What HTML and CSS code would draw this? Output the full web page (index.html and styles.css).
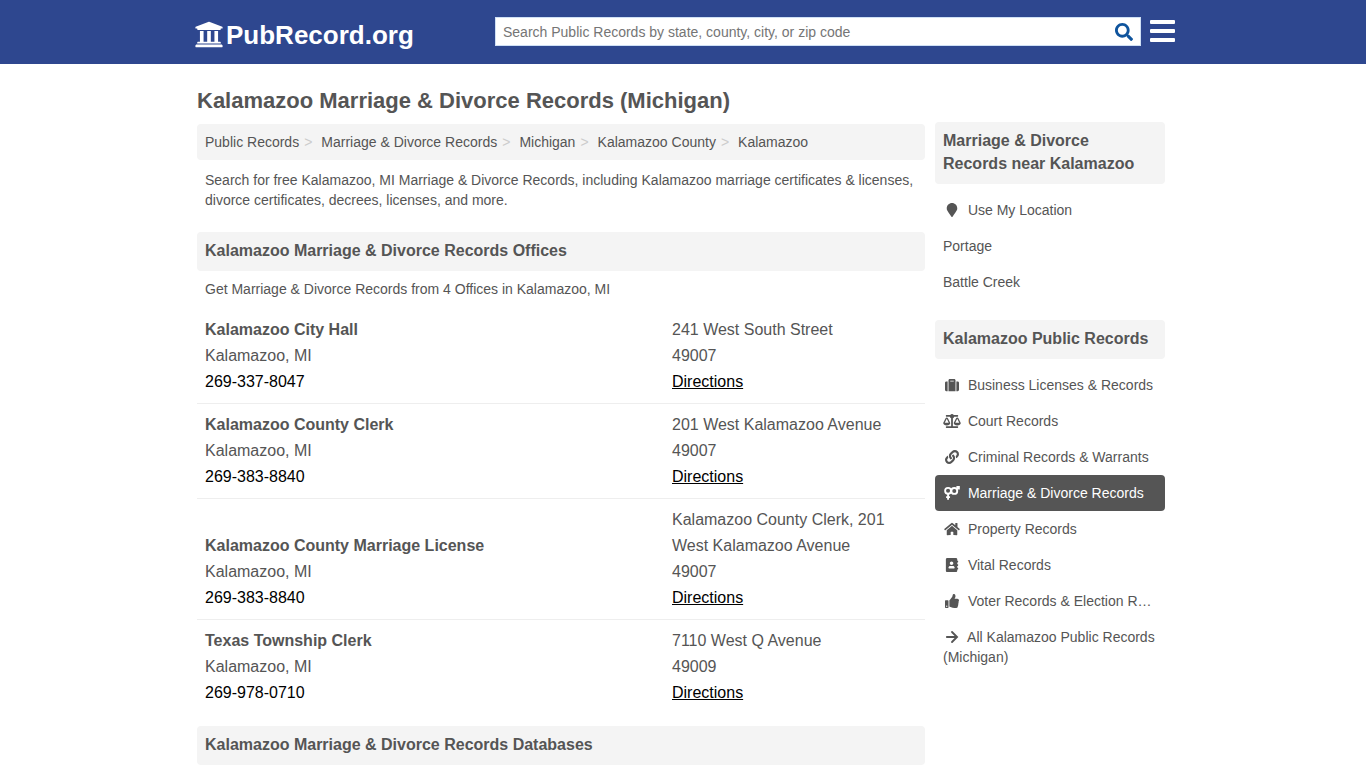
FILE: index.html
```html
<!DOCTYPE html>
<html lang="en">
<head>
  <meta charset="UTF-8" />
  <meta name="viewport" content="width=device-width, initial-scale=1.0" />
  <title>Kalamazoo Marriage &amp; Divorce Records (Michigan)</title>
  <link rel="stylesheet" href="styles.css">
</head>
<body>
  <header class="header">
    <div class="header-inner">
      <a class="logo" href="#">
        <svg viewBox="16 0 480 512" aria-hidden="true"><path d="M496 128v16a8 8 0 0 1-8 8h-24v12c0 6.627-5.373 12-12 12H60c-6.627 0-12-5.373-12-12v-12H24a8 8 0 0 1-8-8v-16a8 8 0 0 1 4.941-7.392l232-88a7.996 7.996 0 0 1 6.118 0l232 88A8 8 0 0 1 496 128zm-24 304H40c-13.255 0-24 10.745-24 24v16a8 8 0 0 0 8 8h464a8 8 0 0 0 8-8v-16c0-13.255-10.745-24-24-24zM96 192v192H60c-6.627 0-12 5.373-12 12v20h416v-20c0-6.627-5.373-12-12-12h-36V192h-64v192h-64V192h-64v192h-64V192H96z"/></svg>
        <span>PubRecord.org</span>
      </a>
      <form class="search" role="search">
        <input type="text" placeholder="Search Public Records by state, county, city, or zip code" aria-label="Search Public Records" />
        <button type="submit" aria-label="Search">
          <svg viewBox="0 0 512 512" aria-hidden="true"><path d="M505 442.7L405.3 343c-4.5-4.5-10.6-7-17-7H372c27.6-35.3 44-79.7 44-128C416 93.1 322.9 0 208 0S0 93.1 0 208s93.1 208 208 208c48.3 0 92.7-16.4 128-44v16.3c0 6.4 2.5 12.5 7 17l99.7 99.7c9.4 9.4 24.6 9.4 33.9 0l28.3-28.3c9.4-9.4 9.4-24.6.1-34zM208 336c-70.7 0-128-57.2-128-128 0-70.7 57.2-128 128-128 70.7 0 128 57.2 128 128 0 70.7-57.2 128-128 128z"/></svg>
        </button>
      </form>
      <button class="menu" type="button" aria-label="Menu">
        <span></span><span></span><span></span>
      </button>
    </div>
  </header>

  <div class="page">
    <main class="main">
      <h1>Kalamazoo Marriage &amp; Divorce Records (Michigan)</h1>
      <nav aria-label="Breadcrumb">
        <ol class="breadcrumb">
          <li><a href="#">Public Records</a></li>
          <li><a href="#">Marriage &amp; Divorce Records</a></li>
          <li><a href="#">Michigan</a></li>
          <li><a href="#">Kalamazoo County</a></li>
          <li><a href="#">Kalamazoo</a></li>
        </ol>
      </nav>
      <p class="intro">Search for free Kalamazoo, MI Marriage &amp; Divorce Records, including Kalamazoo marriage certificates &amp; licenses, divorce certificates, decrees, licenses, and more.</p>

      <h2>Kalamazoo Marriage &amp; Divorce Records Offices</h2>
      <p class="note">Get Marriage &amp; Divorce Records from 4 Offices in Kalamazoo, MI</p>
      <table class="offices">
        <tr>
          <td><b>Kalamazoo City Hall</b><br>Kalamazoo, MI<br><a class="phone" href="tel:269-337-8047">269-337-8047</a></td>
          <td>241 West South Street<br>49007<br><a href="#">Directions</a></td>
        </tr>
        <tr>
          <td><b>Kalamazoo County Clerk</b><br>Kalamazoo, MI<br><a class="phone" href="tel:269-383-8840">269-383-8840</a></td>
          <td>201 West Kalamazoo Avenue<br>49007<br><a href="#">Directions</a></td>
        </tr>
        <tr>
          <td><b>Kalamazoo County Marriage License</b><br>Kalamazoo, MI<br><a class="phone" href="tel:269-383-8840">269-383-8840</a></td>
          <td>Kalamazoo County Clerk, 201 West Kalamazoo Avenue<br>49007<br><a href="#">Directions</a></td>
        </tr>
        <tr>
          <td><b>Texas Township Clerk</b><br>Kalamazoo, MI<br><a class="phone" href="tel:269-978-0710">269-978-0710</a></td>
          <td>7110 West Q Avenue<br>49009<br><a href="#">Directions</a></td>
        </tr>
      </table>

      <h2>Kalamazoo Marriage &amp; Divorce Records Databases</h2>
    </main>

    <aside class="side">
      <h2>Marriage &amp; Divorce Records near Kalamazoo</h2>
      <ul>
        <li><a href="#"><svg viewBox="0 0 384 512" aria-hidden="true"><path d="M172.268 501.67C26.97 291.031 0 269.413 0 192 0 85.961 85.961 0 192 0s192 85.961 192 192c0 77.413-26.97 99.031-172.268 309.67-9.535 13.774-29.93 13.773-39.464 0z"/></svg> Use My Location</a></li>
        <li><a href="#">Portage</a></li>
        <li><a href="#">Battle Creek</a></li>
      </ul>

      <h2>Kalamazoo Public Records</h2>
      <ul>
        <li><a href="#"><svg viewBox="0 0 512 512" aria-hidden="true"><path d="M128 480h256V80c0-26.500-21.500-48-48-48H176c-26.500 0-48 21.500-48 48v400zm64-384h128v32H192V96zm320 80v256c0 26.500-21.500 48-48 48h-48V128h48c26.500 0 48 21.500 48 48zM96 480H48c-26.500 0-48-21.500-48-48V176c0-26.500 21.500-48 48-48h48v352z"/></svg> Business Licenses &amp; Records</a></li>
        <li><a href="#"><svg viewBox="0 0 640 512" aria-hidden="true"><path d="M256 336h-.02c0-16.18 1.34-8.73-85.05-181.51-17.65-35.29-68.19-35.36-85.87 0C-2.06 328.75.02 320.33.02 336H0c0 44.18 57.31 80 128 80s128-35.82 128-80zM128 176l72 144H56l72-144zm511.98 160c0-16.18 1.34-8.73-85.05-181.51-17.65-35.29-68.19-35.36-85.87 0-87.12 174.26-85.04 165.84-85.04 181.51H384c0 44.18 57.31 80 128 80s128-35.82 128-80h-.02zM440 320l72-144 72 144H440zm88 128H352V153.25c23.51-10.29 41.16-31.48 46.39-57.25H528c8.84 0 16-7.16 16-16V48c0-8.84-7.16-16-16-16H383.64C369.04 12.68 346.09 0 320 0s-49.04 12.68-63.64 32H112c-8.84 0-16 7.16-16 16v32c0 8.84 7.16 16 16 16h129.61c5.23 25.76 22.87 46.96 46.39 57.25V448H112c-8.84 0-16 7.16-16 16v32c0 8.84 7.16 16 16 16h416c8.84 0 16-7.16 16-16v-32c0-8.84-7.16-16-16-16z"/></svg> Court Records</a></li>
        <li><a href="#"><svg viewBox="0 0 512 512" aria-hidden="true"><path d="M326.612 185.391c59.747 59.809 58.927 155.698.36 214.59-.11.12-.24.25-.36.37l-67.2 67.2c-59.27 59.27-155.699 59.262-214.96 0-59.27-59.26-59.27-155.7 0-214.96l37.106-37.106c9.84-9.84 26.786-3.3 27.294 10.606.648 17.722 3.826 35.527 9.69 52.721 1.986 5.822.567 12.262-3.783 16.612l-13.087 13.087c-28.026 28.026-28.905 73.66-1.155 101.96 28.024 28.579 74.086 28.749 102.325.51l67.2-67.19c28.191-28.191 28.073-73.757 0-101.83-3.701-3.694-7.429-6.564-10.341-8.569a16.037 16.037 0 0 1-6.947-12.606c-.396-10.567 3.348-21.456 11.698-29.806l21.054-21.055c5.521-5.521 14.182-6.199 20.584-1.731a152.482 152.482 0 0 1 20.522 17.197zM467.547 44.449c-59.261-59.262-155.69-59.27-214.96 0l-67.2 67.2c-.12.12-.25.25-.36.37-58.566 58.892-59.387 154.781.36 214.59a152.454 152.454 0 0 0 20.521 17.196c6.402 4.468 15.064 3.789 20.584-1.731l21.054-21.055c8.35-8.35 12.094-19.239 11.698-29.806a16.037 16.037 0 0 0-6.947-12.606c-2.912-2.005-6.64-4.875-10.341-8.569-28.073-28.073-28.191-73.639 0-101.83l67.2-67.19c28.239-28.239 74.3-28.069 102.325.51 27.75 28.3 26.872 73.934-1.155 101.96l-13.087 13.087c-4.35 4.35-5.769 10.79-3.783 16.612 5.864 17.194 9.042 34.999 9.69 52.721.509 13.906 17.454 20.446 27.294 10.606l37.106-37.106c59.271-59.259 59.271-155.699.001-214.959z"/></svg> Criminal Records &amp; Warrants</a></li>
        <li><a class="active" href="#"><svg class="outline" viewBox="0 0 576 512" aria-hidden="true"><circle cx="144" cy="176" r="108"/><path d="M144 288v216M72 408h144M455 100l80-72M450 34h90v90"/><circle cx="372" cy="180" r="108"/></svg> Marriage &amp; Divorce Records</a></li>
        <li><a href="#"><svg viewBox="0 0 576 512" aria-hidden="true"><path d="M280.37 148.26L96 300.11V464a16 16 0 0 0 16 16l112.06-.29a16 16 0 0 0 15.92-16V368a16 16 0 0 1 16-16h64a16 16 0 0 1 16 16v95.64a16 16 0 0 0 16 16.05L464 480a16 16 0 0 0 16-16V300L295.67 148.26a12.19 12.19 0 0 0-15.3 0zM571.6 251.47L488 182.56V44.05a12 12 0 0 0-12-12h-56a12 12 0 0 0-12 12v72.61L318.47 43a48 48 0 0 0-61 0L4.34 251.47a12 12 0 0 0-1.6 16.9l25.5 31A12 12 0 0 0 45.15 301l235.22-193.74a12.19 12.19 0 0 1 15.3 0L530.9 301a12 12 0 0 0 16.9-1.6l25.5-31a12 12 0 0 0-1.7-16.93z"/></svg> Property Records</a></li>
        <li><a href="#"><svg viewBox="0 0 448 512" aria-hidden="true"><path d="M436 160c6.6 0 12-5.4 12-12v-40c0-6.6-5.4-12-12-12h-20V48c0-26.5-21.5-48-48-48H48C21.5 0 0 21.5 0 48v416c0 26.5 21.5 48 48 48h320c26.5 0 48-21.5 48-48v-48h20c6.6 0 12-5.4 12-12v-40c0-6.6-5.4-12-12-12h-20v-64h20c6.6 0 12-5.4 12-12v-40c0-6.6-5.4-12-12-12h-20v-64h20zm-228-32c35.3 0 64 28.7 64 64s-28.7 64-64 64-64-28.7-64-64 28.7-64 64-64zm112 236.8c0 10.6-10 19.2-22.4 19.2H118.4C106 384 96 375.4 96 364.8v-19.2c0-31.8 30.1-57.6 67.2-57.6h5c12.3 5.1 25.7 8 39.8 8s27.6-2.9 39.8-8h5c37.1 0 67.2 25.8 67.2 57.6v19.2z"/></svg> Vital Records</a></li>
        <li><a href="#"><svg viewBox="0 0 512 512" aria-hidden="true"><path d="M104 224H24c-13.255 0-24 10.745-24 24v240c0 13.255 10.745 24 24 24h80c13.255 0 24-10.745 24-24V248c0-13.255-10.745-24-24-24zM64 472c-13.255 0-24-10.745-24-24s10.745-24 24-24 24 10.745 24 24-10.745 24-24 24zM384 81.452c0 42.416-25.97 66.208-33.277 94.548h101.723c33.397 0 59.397 27.746 59.553 58.098.084 17.938-7.546 37.249-19.439 49.197l-.11.11c9.836 23.337 8.237 56.037-9.308 79.469 8.681 25.895-.069 57.704-16.382 74.757 4.298 17.598 2.244 32.575-6.148 44.632C440.202 511.587 389.616 512 346.839 512l-2.845-.001c-48.287-.017-87.806-17.598-119.56-31.725-15.957-7.099-36.821-15.887-52.651-16.178-6.54-.12-11.783-5.457-11.783-11.998v-213.77c0-3.2 1.282-6.271 3.558-8.521 39.614-39.144 56.648-80.587 89.117-113.111 14.804-14.832 20.188-37.236 25.393-58.902C282.515 39.293 291.817 0 312 0c24 0 72 8 72 81.452z"/></svg> Voter Records &amp; Election R…</a></li>
        <li><a href="#"><svg class="outline arrow" viewBox="0 0 448 512" aria-hidden="true"><path d="M36 256h360M224 72l184 184-184 184"/></svg> All Kalamazoo Public Records (Michigan)</a></li>
      </ul>
    </aside>
  </div>
</body>
</html>
```

FILE: styles.css
```css
* {
  box-sizing: border-box;
}
body {
  margin: 0;
  font-family: "Liberation Sans", Arial, sans-serif;
  font-size: 14px;
  line-height: 20px;
  color: #555;
  background: #fff;
}
a {
  color: inherit;
  text-decoration: none;
}
h1, h2, p, ul, ol {
  margin: 0;
  padding: 0;
}
ul, ol {
  list-style: none;
}

/* header */
.header {
  background: #2e478f;
}
.header-inner {
  display: flex;
  align-items: center;
  max-width: 984px;
  height: 64px;
  margin: 0 auto;
  padding: 0 0 2px 4px;
}
.logo {
  display: flex;
  align-items: center;
  gap: 3px;
  color: #fff;
  font-size: 26px;
  line-height: 32px;
  font-weight: bold;
  padding-top: 8px;
}
.logo svg {
  width: 28px;
  height: 29px;
  fill: currentColor;
  margin-bottom: 2px;
}
.search {
  display: flex;
  flex: 0 1 646px;
  height: 29px;
  margin-left: auto;
  background: #fff;
  border: 1px solid #cfe0f5;
}
.search input {
  flex: 1;
  min-width: 0;
  padding: 2px 7px 0;
  border: none;
  background: none;
  font: inherit;
  color: #555;
}
.search input::placeholder {
  color: #757575;
}
.search button {
  display: flex;
  align-items: center;
  padding: 2px 7px 0;
  border: none;
  background: none;
  cursor: pointer;
}
.search svg {
  width: 18px;
  height: 18px;
  fill: #0f549d;
}
.menu {
  display: flex;
  flex-direction: column;
  gap: 5px;
  width: 25px;
  margin-left: 9px;
  padding: 0;
  border: none;
  background: none;
  cursor: pointer;
}
.menu span {
  height: 4px;
  border-radius: 1px;
  background: #fff;
}

/* layout */
.page {
  display: flex;
  gap: 10px;
  max-width: 980px;
  margin: 0 auto;
  padding: 24px 8px 0 4px;
}
.main {
  flex: 1;
  min-width: 0;
}
.side {
  width: 230px;
  padding-top: 34px;
}
h1 {
  font-size: 22px;
  line-height: 26px;
  margin-bottom: 10px;
}
h2 {
  padding: 7px 8px 9px;
  font-size: 16px;
  line-height: 23px;
  background: #f4f4f4;
  border-radius: 4px;
}

.breadcrumb {
  display: flex;
  flex-wrap: wrap;
  padding: 8px;
  background: #f4f4f4;
  border-radius: 4px;
}
.breadcrumb li + li::before {
  content: ">";
  padding: 0 9px 0 5px;
  color: #ccc;
}
.intro {
  padding: 10px 8px 22px;
}
.note {
  padding: 8px 8px 10px;
}

.offices {
  width: 100%;
  table-layout: fixed;
  border-collapse: collapse;
  margin-bottom: 12px;
  font-size: 16px;
  line-height: 26px;
}
.offices td {
  padding: 8px;
  vertical-align: bottom;
  border-bottom: 1px solid #eee;
}
.offices td:first-child {
  width: 467px;
}
.offices tr:last-child td {
  border-bottom: none;
}
.offices a {
  color: #000;
  text-decoration: underline;
}
.offices .phone {
  text-decoration: none;
}

/* sidebar */
.side ul {
  padding: 8px 0 20px;
}
.side li a {
  display: block;
  padding: 8px;
  border-radius: 4px;
}
.side li a.active {
  color: #fff;
  background: #555;
}
.side svg {
  width: 18px;
  height: 14px;
  margin-right: 3px;
  vertical-align: -2px;
  fill: currentColor;
}
.side svg.outline {
  fill: none;
  stroke: currentColor;
  stroke-width: 68;
}
.side svg.arrow {
  stroke-linecap: round;
}
```
